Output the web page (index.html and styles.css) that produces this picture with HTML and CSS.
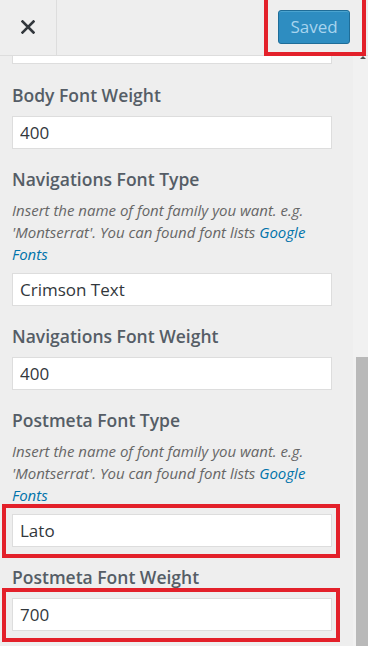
FILE: index.html
```html
<!DOCTYPE html>
<html>
<head>
<meta charset="utf-8">
<link rel="stylesheet" href="styles.css">
</head>
<body>
<div class="header">
  <button class="close" aria-label="Close">
    <svg width="14" height="14" viewBox="0 0 14 14"><path d="M1.5 1.5 L12.5 12.5 M12.5 1.5 L1.5 12.5" stroke="#32373c" stroke-width="2.6" stroke-linecap="square"/></svg>
  </button>
  <div class="spacer"></div>
  <div class="mark mark-save">
    <button class="save">Saved</button>
  </div>
</div>
<div class="panel">
  <ul class="controls">
    <li class="control stub"><div class="stub-input"></div></li>
    <li class="control">
      <span class="title">Body Font Weight</span>
      <input class="field" type="text" value="400">
    </li>
    <li class="control">
      <span class="title">Navigations Font Type</span>
      <span class="desc">Insert the name of font family you want. e.g. 'Montserrat'. You can found font lists <a href="#">Google Fonts</a></span>
      <input class="field" type="text" value="Crimson Text">
    </li>
    <li class="control">
      <span class="title">Navigations Font Weight</span>
      <input class="field" type="text" value="400">
    </li>
    <li class="control">
      <span class="title">Postmeta Font Type</span>
      <span class="desc">Insert the name of font family you want. e.g. 'Montserrat'. You can found font lists <a href="#">Google Fonts</a></span>
      <div class="mark mark-field"><input class="field" type="text" value="Lato"></div>
    </li>
    <li class="control">
      <span class="title">Postmeta Font Weight</span>
      <div class="mark mark-field"><input class="field" type="text" value="700"></div>
    </li>
  </ul>
</div>
<div class="scrollbar">
  <span class="arrow"></span>
  <span class="thumb"></span>
</div>
</body>
</html>
```
FILE: styles.css
```css
* { box-sizing: border-box; }
html, body { margin: 0; padding: 0; }
body {
  width: 368px;
  height: 646px;
  overflow: hidden;
  background: #eeeeee;
  font-family: "Open Sans", "Noto Sans", sans-serif;
  color: #555d66;
  position: relative;
}
.header {
  display: flex;
  align-items: stretch;
  height: 56px;
  border-bottom: 1px solid #dddddd;
  background: #eeeeee;
}
.close {
  width: 57px;
  border: 0;
  border-right: 1px solid #dddddd;
  background: transparent;
  display: flex;
  align-items: center;
  justify-content: center;
  padding: 0 0 1px 0;
}
.spacer { flex: 1; }
.mark { position: relative; }
.mark::after {
  content: "";
  position: absolute;
  border: 4px solid #e3202a;
  pointer-events: none;
}
.mark-save {
  display: flex;
  align-items: center;
  padding: 0 16px 1px 14px;
  margin-right: 2px;
}
.mark-save::after { left: 0; right: 0; top: -4px; bottom: -1px; }
.save {
  width: 72px;
  height: 34px;
  border: 1px solid #1f6d98;
  border-radius: 3px;
  background: #2e8dc1;
  color: #a8d4ee;
  font-family: "Open Sans", sans-serif;
  font-size: 17px;
  padding: 0 0 2px 0;
  box-shadow: inset 0 1px 0 rgba(120,200,230,0.4);
}
.panel {
  padding: 0 36px 0 12px;
}
.controls {
  list-style: none;
  margin: 0;
  padding: 0;
}
.control { margin-bottom: 18px; }
.control.stub { margin-bottom: 19px; }
.stub-input {
  height: 8px;
  background: #fff;
  border: 1px solid #dddddd;
  border-top: 0;
}
.title {
  display: block;
  font-size: 17.5px;
  line-height: 24px;
  font-weight: 600;
  color: #555d66;
  margin-bottom: 9px;
}
.desc {
  display: block;
  font-size: 15px;
  line-height: 22px;
  font-style: italic;
  color: #666666;
  margin: -1px 0 8px 0;
}
.desc a { color: #0073aa; text-decoration: none; }
.field {
  display: block;
  width: 100%;
  height: 33px;
  border: 1px solid #dddddd;
  background: #fff;
  padding: 0 7px;
  font-family: "Open Sans", sans-serif;
  font-size: 17px;
  color: #32373c;
  outline: none;
  margin: 0;
}
.mark-field::after { left: -10px; right: -8px; top: -10px; bottom: -11px; }
.scrollbar {
  position: absolute;
  top: 56px;
  right: 0;
  bottom: 0;
  width: 15px;
  background: #f1f1f1;
}
.arrow {
  position: absolute;
  top: 0;
  left: 7px;
  width: 0;
  height: 0;
  border-left: 3px solid transparent;
  border-right: 3px solid transparent;
  border-bottom: 3px solid #505050;
}
.thumb {
  position: absolute;
  top: 301px;
  left: 3px;
  right: 0;
  bottom: 0;
  background: #b9b9b9;
}
```
